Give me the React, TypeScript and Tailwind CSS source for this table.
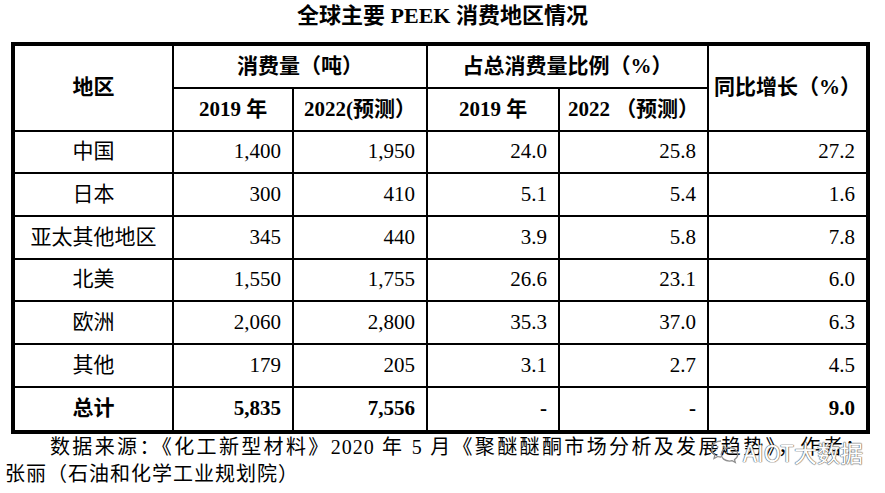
import React from 'react';

const rows = [
  { region: '中国', v2019: '1,400', v2022: '1,950', p2019: '24.0', p2022: '25.8', growth: '27.2' },
  { region: '日本', v2019: '300', v2022: '410', p2019: '5.1', p2022: '5.4', growth: '1.6' },
  { region: '亚太其他地区', v2019: '345', v2022: '440', p2019: '3.9', p2022: '5.8', growth: '7.8' },
  { region: '北美', v2019: '1,550', v2022: '1,755', p2019: '26.6', p2022: '23.1', growth: '6.0' },
  { region: '欧洲', v2019: '2,060', v2022: '2,800', p2019: '35.3', p2022: '37.0', growth: '6.3' },
  { region: '其他', v2019: '179', v2022: '205', p2019: '3.1', p2022: '2.7', growth: '4.5' },
];

const rowHeights = ['h-[42px]', 'h-[43px]', 'h-[43px]', 'h-[42px]', 'h-[43px]', 'h-[43px]'];

const serif = "font-['Liberation_Serif','Noto_Sans_CJK_SC',serif]";

function WeChatMark() {
  return (
    <svg width="30" height="26" viewBox="0 0 30 26" className="shrink-0">
      <path
        d="M11 2C5.5 2 1.5 5.6 1.5 10c0 2.5 1.3 4.6 3.4 6.1L4 19.5l3.8-2c1 .3 2.1.5 3.2.5"
        fill="none"
        stroke="#8a8a8a"
        strokeWidth="1.3"
      />
      <path
        d="M19.5 8.5c-4.6 0-8.3 3-8.3 6.8s3.7 6.8 8.3 6.8c.9 0 1.8-.1 2.6-.4l3.2 1.7-.8-2.8c2-1.3 3.3-3.1 3.3-5.3 0-3.8-3.7-6.8-8.3-6.8z"
        fill="none"
        stroke="#8a8a8a"
        strokeWidth="1.3"
      />
      <circle cx="7.5" cy="8" r="1" fill="#8a8a8a" />
      <circle cx="14" cy="8" r="1" fill="#8a8a8a" />
      <circle cx="16.5" cy="13.5" r="0.9" fill="#8a8a8a" />
      <circle cx="22.5" cy="13.5" r="0.9" fill="#8a8a8a" />
    </svg>
  );
}

export default function App() {
  return (
    <div className={`relative w-[885px] h-[493px] overflow-hidden bg-white text-black ${serif}`}>
      {/* Title */}
      <div className="h-[42px] text-center text-[22px] font-bold leading-[32px]">
        全球主要 PEEK 消费地区情况
      </div>

      {/* Table */}
      <div className="ml-[11px] w-[859px] border-4 border-black">
        <table className="w-full table-fixed border-collapse border-hidden text-[21px]">
          <colgroup>
            <col className="w-[158px]" />
            <col className="w-[120px]" />
            <col className="w-[134px]" />
            <col className="w-[132px]" />
            <col className="w-[149px]" />
            <col className="w-[158px]" />
          </colgroup>
          <thead className="font-bold">
            <tr className="h-[42px]">
              <th rowSpan={2} className="border-2 border-black p-0 text-center align-middle">
                地区
              </th>
              <th colSpan={2} className="border-2 border-black p-0 text-center align-middle">
                消费量（吨）
              </th>
              <th colSpan={2} className="border-2 border-black p-0 text-center align-middle">
                占总消费量比例（%）
              </th>
              <th rowSpan={2} className="border-2 border-black p-0 text-center align-middle">
                同比增长（%）
              </th>
            </tr>
            <tr className="h-[43px]">
              <th className="border-2 border-black p-0 text-center align-middle">2019 年</th>
              <th className="border-2 border-black p-0 text-center align-middle">2022(预测）</th>
              <th className="border-2 border-black p-0 text-center align-middle">2019 年</th>
              <th className="border-2 border-black p-0 text-center align-middle">2022 （预测）</th>
            </tr>
          </thead>
          <tbody>
            {rows.map((r, i) => (
              <tr key={r.region} className={rowHeights[i]}>
                <td className="border-2 border-black p-0 text-center align-middle">{r.region}</td>
                <td className="border-2 border-black p-0 pr-[11px] text-right align-middle">{r.v2019}</td>
                <td className="border-2 border-black p-0 pr-[11px] text-right align-middle">{r.v2022}</td>
                <td className="border-2 border-black p-0 pr-[11px] text-right align-middle">{r.p2019}</td>
                <td className="border-2 border-black p-0 pr-[11px] text-right align-middle">{r.p2022}</td>
                <td className="border-2 border-black p-0 pr-[11px] text-right align-middle">{r.growth}</td>
              </tr>
            ))}
            <tr className="h-[43px] font-bold">
              <td className="border-2 border-black p-0 text-center align-middle">总计</td>
              <td className="border-2 border-black p-0 pr-[11px] text-right align-middle">5,835</td>
              <td className="border-2 border-black p-0 pr-[11px] text-right align-middle">7,556</td>
              <td className="border-2 border-black p-0 pr-[11px] text-right align-middle">-</td>
              <td className="border-2 border-black p-0 pr-[11px] text-right align-middle">-</td>
              <td className="border-2 border-black p-0 pr-[11px] text-right align-middle">9.0</td>
            </tr>
          </tbody>
        </table>
      </div>

      {/* Source note */}
      <div className="w-[866px] pl-[5px] text-[20px] leading-[27px] tracking-[1px]">
        <div className="pl-[45px] text-justify [text-align-last:justify] whitespace-nowrap">
          数据来源：《化工新型材料》2020 年 5 月《聚醚醚酮市场分析及发展趋势》，作者：
        </div>
        <div>张丽（石油和化学工业规划院）</div>
      </div>

      {/* Watermark */}
      <div className="absolute left-[710px] top-[439px] flex items-center gap-[3px] opacity-95">
        <WeChatMark />
        <span className="font-['Noto_Sans_CJK_SC',sans-serif] text-[23px] leading-[26px] text-white [text-shadow:0_0_1px_#555,0_0_1px_#555,0_0_1px_#555]">
          AIOT大数据
        </span>
      </div>
    </div>
  );
}
